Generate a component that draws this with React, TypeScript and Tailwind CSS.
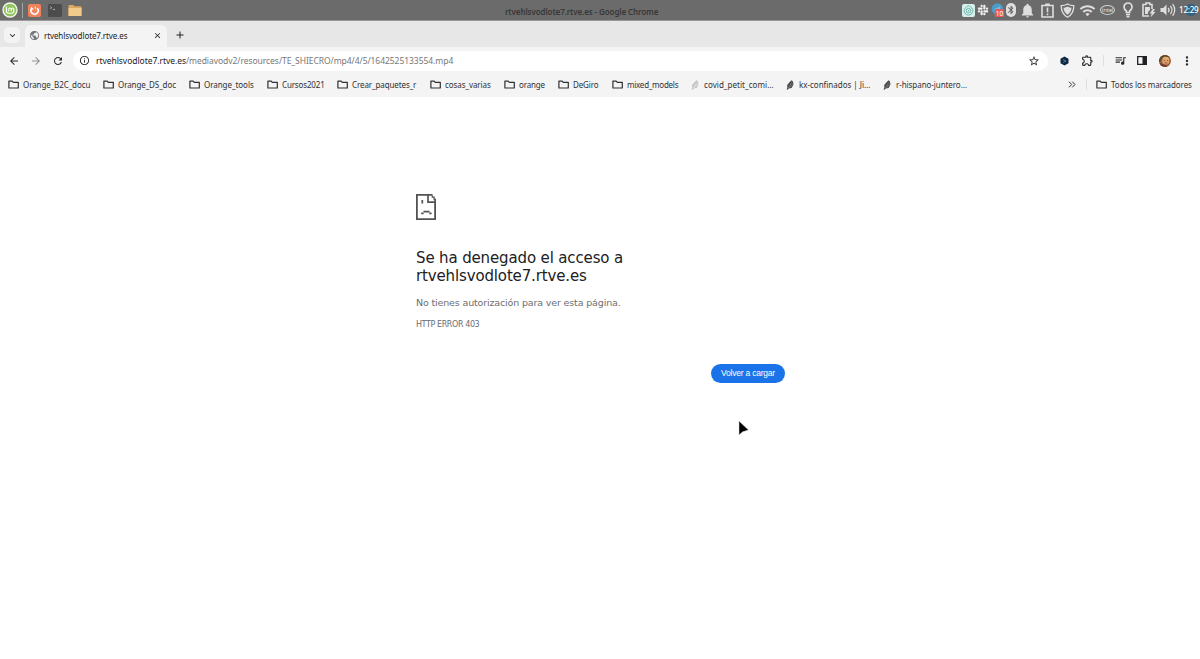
import React from 'react';
import {
  MdAdd,
  MdArrowBack,
  MdArrowForward,
  MdBluetooth,
  MdClose,
  MdInfoOutline,
  MdKeyboardArrowDown,
  MdMoreVert,
  MdNotifications,
  MdOutlineExtension,
  MdPublic,
  MdQueueMusic,
  MdRefresh,
  MdStarBorder,
  MdWifi,
} from 'react-icons/md';
import { FaSlack } from 'react-icons/fa';

interface Bookmark {
  label: string;
  slot: string;
  tracking: string;
  icon: 'folder' | 'feather' | 'faded';
}

const bookmarks: Bookmark[] = [
  { label: 'Orange_B2C_docu', slot: 'w-[95px]', tracking: 'tracking-[-0.1px]', icon: 'folder' },
  { label: 'Orange_DS_doc', slot: 'w-[86px]', tracking: 'tracking-[-0.1px]', icon: 'folder' },
  { label: 'Orange_tools', slot: 'w-[78px]', tracking: 'tracking-[-0.05px]', icon: 'folder' },
  { label: 'Cursos2021', slot: 'w-[70px]', tracking: 'tracking-[-0.15px]', icon: 'folder' },
  { label: 'Crear_paquetes_r', slot: 'w-[93px]', tracking: 'tracking-[-0.1px]', icon: 'folder' },
  { label: 'cosas_varias', slot: 'w-[74px]', tracking: 'tracking-[-0.08px]', icon: 'folder' },
  { label: 'orange', slot: 'w-[54px]', tracking: 'tracking-[-0.15px]', icon: 'folder' },
  { label: 'DeGiro', slot: 'w-[54px]', tracking: 'tracking-[-0.15px]', icon: 'folder' },
  { label: 'mixed_models', slot: 'w-[79px]', tracking: 'tracking-[-0.25px]', icon: 'folder' },
  { label: 'covid_petit_comi…', slot: 'w-[95px]', tracking: 'tracking-[0.06px]', icon: 'faded' },
  { label: 'kx-confinados | Ji…', slot: 'w-[97px]', tracking: 'tracking-[-0.02px]', icon: 'feather' },
  { label: 'r-hispano-juntero…', slot: 'w-[91px]', tracking: 'tracking-[-0.07px]', icon: 'feather' },
];

function FolderIcon() {
  return (
    <svg className="h-[9px] w-[11px] shrink-0" viewBox="0 0 11 9" fill="none" stroke="#303134" strokeWidth="1.2">
      <path d="M.9 1.1h3.3l1.1 1.2h5v5.7H.9z" strokeLinejoin="round" />
    </svg>
  );
}

function FeatherIcon({ faded }: { faded: boolean }) {
  return (
    <svg className="h-[10px] w-[9px] shrink-0" viewBox="0 0 9 10" fill={faded ? '#c2c2c2' : '#4b4b4b'}>
      <path d="M5.6.3 7 1.6 7.4 4.7 5.6 8 2.7 8.4 1.5 9.8.6 9.4 1.3 7.8 1.2 5 3.5 2.3z" />
      <path d="M5.8 2.4 2.4 8M7.4 3.6 3.5 7.5" stroke={faded ? '#f4f4f4' : '#8d8d8d'} strokeWidth=".6" />
    </svg>
  );
}

function MintIcon() {
  return (
    <svg className="h-4 w-4" viewBox="0 0 16 16" fill="none">
      <circle cx="8" cy="8" r="7.7" fill="#f1f7e9" />
      <circle cx="8" cy="8" r="6.3" fill="#91c45c" />
      <path d="M4.4 4.5v4.6a2.2 2.2 0 0 0 2.2 2.2h3a2.2 2.2 0 0 0 2.2-2.2V7.2a1.2 1.2 0 0 0-2.4 0v2M6.8 9.2v-2a1.2 1.2 0 0 1 2.5 0" stroke="#fff" strokeWidth="1.1" />
    </svg>
  );
}

function LauncherIcons() {
  return (
    <div className="flex items-center pl-[2px]">
      <MintIcon />
      <div className="ml-1 h-[15px] w-px bg-[#a3a3a3]" />
      <svg className="ml-[5px] h-[13px] w-[13px]" viewBox="0 0 13 13" fill="none">
        <rect width="13" height="13" rx="2" fill="#f0835a" />
        <path d="M3.9 4.2a3.6 3.6 0 1 0 5.4 0" stroke="#fff" strokeWidth="1.6" />
        <path d="M3 2.4v3.2h3zM6.3 2.2c1.6.6 2.3 2 1.7 3.8" fill="#fff" />
      </svg>
      <svg className="ml-[7px] h-[13px] w-[14px]" viewBox="0 0 14 13" fill="none">
        <rect width="14" height="13" rx="1.5" fill="#4c4c4c" />
        <path d="m2.2 2.5 1.5 1.2-1.5 1.2M4.8 5.4h2.3" stroke="#c9c9c9" strokeWidth=".8" />
      </svg>
      <svg className="ml-[6px] h-[13px] w-[14px]" viewBox="0 0 14 13">
        <path d="M.5 2a1 1 0 0 1 1-1h3.7l1.3 1.3h6a1 1 0 0 1 1 1V12H.5z" fill="#dda95f" />
        <path d="M.5 3.9h13v7a1 1 0 0 1-1 1h-11a1 1 0 0 1-1-1z" fill="#f2ca8b" />
      </svg>
    </div>
  );
}

function TrayIcons() {
  return (
    <div className="flex h-5 items-center text-[#dedede]">
      <svg className="h-[13px] w-[13px]" viewBox="0 0 13 13" fill="none" stroke="#58aa9b">
        <rect width="13" height="13" rx="2" fill="#d8efeb" stroke="none" />
        <path d="M6.5 1.7c3 1.3 4.6 3 4.3 5.6-.5 2.6-2.4 3.7-4.3 3.9-2-.2-3.9-1.4-4.3-3.9C2 4.7 3.7 3 6.5 1.7z" strokeWidth=".8" />
        <circle cx="6.5" cy="6.7" r="2.3" strokeWidth=".8" />
        <circle cx="6.5" cy="6.7" r=".7" fill="#58aa9b" stroke="none" />
      </svg>
      <FaSlack className="ml-[2px] h-3 w-3 text-[#f0f0f0]" />
      <svg className="ml-[2px] h-[14px] w-[14px]" viewBox="0 0 14 14">
        <circle cx="6.3" cy="6" r="5.8" fill="#4a9cc9" />
        <path d="m3 6.2 6.5-3-1.2 6-2-1.5z" fill="#7abcda" />
        <rect x="3.8" y="6" width="9.2" height="8" rx="1.5" fill="#e65c5c" />
        <text x="4.7" y="12.5" fill="#fff" fontSize="6.5" fontFamily="Noto Sans">10</text>
      </svg>
      <span className="ml-px flex h-[14px] w-[10px] items-center justify-center rounded-full bg-[#dedede]">
        <MdBluetooth className="h-[12px] w-[12px] text-[#5c5c5c]" />
      </span>
      <MdNotifications className="ml-[3px] h-[17px] w-[17px]" />
      <svg className="ml-[5px] h-[15px] w-[13px]" viewBox="0 0 13 15" fill="none" stroke="currentColor" strokeWidth="1.6">
        <path d="M1 2.5h11V14H1z" />
        <path d="M4.2 1.4h4.6M6.5 4.5v4.8M6.5 10.6v1.6" />
      </svg>
      <svg className="ml-[6px] h-[15px] w-[15px]" viewBox="0 0 15 15" fill="none" stroke="currentColor">
        <path d="M7.5 1c2 1.3 4 1.7 6.3 1.7 0 5.4-1.7 9-6.3 11.5C2.9 11.7 1.2 8.1 1.2 2.7 3.5 2.7 5.5 2.3 7.5 1z" strokeWidth="1.3" />
        <path d="M7.5 3.6c1.4.8 2.7 1.2 4 1.2-.2 3.1-1.5 5.3-4 6.900-2.500-1.600-3.800-3.800-4-6.900 1.400 0 2.600-.4 4-1.200z" fill="currentColor" stroke="none" />
      </svg>
      <MdWifi className="ml-[4px] h-[17px] w-[17px]" />
      <span className="ml-[4px] flex h-[10px] w-[15px] items-center justify-center rounded-[50%] border border-[#cfcfcf] text-[6px] leading-none tracking-[-0.2px]">intel</span>
      <svg className="ml-[8px] h-[16px] w-[10px]" viewBox="0 0 10 16" fill="none" stroke="currentColor" strokeWidth="1.7">
        <path d="M3.4 10.5V9C2 8 1 7 1 5a4 4 0 0 1 8 0c0 2-1 3-2.4 4v1.5z" />
        <path d="M3 12.5h4M3.5 14.7h3" />
      </svg>
      <svg className="ml-[9px] h-[16px] w-[14px]" viewBox="0 0 14 16" fill="none" stroke="currentColor" strokeWidth="1.6">
        <path d="M10 7V2.5H7.8V1H4v1.5H1V14h6" />
        <path d="M3 5h5v3L6 10v2H3z" fill="currentColor" stroke="none" />
        <path d="m10.8 7-3 4.5h2L8.5 15.5l5-5.5h-2.3L13 7z" fill="currentColor" stroke="none" />
      </svg>
      <svg className="ml-[4px] h-[14px] w-[16px]" viewBox="0 0 16 14" fill="none" stroke="currentColor" strokeWidth="1.3">
        <path d="M.5 5h2.7l3.300-3.500v11L3.200 9H.5z" fill="currentColor" stroke="none" />
        <path d="M8.2 4.800a3.500 3.500 0 0 1 0 4.400M10.400 3a6 6 0 0 1 0 8M12.600 1.200a9 9 0 0 1 0 11.600" />
      </svg>
      <span className="relative ml-[3px] w-[20px] shrink-0 whitespace-nowrap text-[8px] font-medium leading-3 tracking-[-0.2px] text-white">
        <span className="absolute left-[6px] top-0 h-3 w-3 rounded-full bg-[#31627f]" />
        <span className="relative">12:29</span>
      </span>
    </div>
  );
}

function SystemBar() {
  return (
    <header className="grid h-[21px] grid-cols-[505px_1fr_238px] items-center border-b border-[#999] bg-[#6b6b6b]">
      <LauncherIcons />
      <p className="whitespace-nowrap pt-[3px] text-[8px] font-semibold leading-3 tracking-[-0.1px] text-[#383838]">
        rtvehlsvodlote7.rtve.es - Google Chrome
      </p>
      <TrayIcons />
    </header>
  );
}

function TabStrip() {
  return (
    <div className="flex h-[26px] items-end bg-[#e7e7e7] pl-[4px] text-[#202124]">
      <button type="button" className="mb-[4px] flex h-[16px] w-[16px] items-center justify-center rounded-[5px] bg-[#f4f4f4]">
        <MdKeyboardArrowDown className="h-[11px] w-[11px]" />
      </button>
      <div className="ml-[5px] flex h-[22px] w-[142px] items-center rounded-t-[6px] bg-[#f4f4f4] pb-px pl-[4px] pr-[5px]">
        <MdPublic className="h-[11px] w-[11px] text-[#73777b]" />
        <span className="ml-[4px] grow whitespace-nowrap text-[8px] tracking-[-0.1px]">rtvehlsvodlote7.rtve.es</span>
        <MdClose className="h-[9px] w-[9px]" />
      </div>
      <MdAdd className="mb-[6px] ml-[7px] h-[12px] w-[12px]" />
    </div>
  );
}

function Toolbar() {
  return (
    <div className="flex h-[27px] items-center bg-[#f4f4f4] pl-[8px] pr-[6px] text-[#26282b]">
      <MdArrowBack className="h-[12px] w-[12px]" />
      <MdArrowForward className="ml-[10px] h-[12px] w-[12px] text-[#8f8f8f]" />
      <MdRefresh className="ml-[10px] h-[12px] w-[12px]" />
      <div className="ml-[9px] flex h-[20px] w-[975px] items-center rounded-full bg-white pl-[6px] pr-[8px]">
        <MdInfoOutline className="h-[11px] w-[11px]" />
        <p className="ml-[6px] grow whitespace-nowrap pt-px text-[8.5px] tracking-[-0.05px] text-[#777]">
          <span className="text-[#202124]">rtvehlsvodlote7.rtve.es</span>
          /mediavodv2/resources/TE_SHIECRO/mp4/4/5/1642525133554.mp4
        </p>
        <MdStarBorder className="h-[12px] w-[12px]" />
      </div>
      <svg className="ml-[12px] h-[10px] w-[9px]" viewBox="0 0 9 10">
        <path d="M4.5.5 8.5 2.8v4.500L4.500 9.600.5 7.300V2.800z" fill="#0c2845" />
        <path d="m3 3.500 3 1.500-3 1.500" stroke="#6f9ab5" strokeWidth=".7" fill="none" />
      </svg>
      <MdOutlineExtension className="ml-[12px] h-[13px] w-[13px]" />
      <div className="ml-[9px] h-[11px] w-px bg-[#dfdfdf]" />
      <MdQueueMusic className="ml-[10px] h-[13px] w-[13px]" />
      <svg className="ml-[10px] h-[9px] w-[10px]" viewBox="0 0 10 9">
        <path d="M.7.7h8.600v7.600H.7z" fill="none" stroke="#202124" strokeWidth="1.3" />
        <path d="M5.5.5h4v8h-4z" fill="#202124" />
      </svg>
      <svg className="ml-[12px] h-[12px] w-[12px] rounded-full" viewBox="0 0 12 12">
        <path d="M0 0h12v12H0z" fill="#99643d" />
        <path d="M0 0h12v3L8 2 3 3 1 7H0z" fill="#59452f" />
        <circle cx="6.8" cy="6" r="3.6" fill="#dda06e" />
        <path d="M3 3.500C5 1 9 1 10.500 4L7 3.500z" fill="#e4b367" />
        <path d="M5 5.500h1M8 5.500h1M5.500 8h3" stroke="#71412d" strokeWidth=".7" />
        <path d="M0 8c3 0 4 2 7 2l2 2H0z" fill="#77382c" />
      </svg>
      <MdMoreVert className="ml-[9px] h-[14px] w-[14px]" />
    </div>
  );
}

function BookmarksBar() {
  return (
    <nav className="flex h-[23px] items-center bg-[#f4f4f4] pb-[2px] pl-[8px] text-[8px] text-[#303134]">
      {bookmarks.map((item) => (
        <div key={item.label} className={`flex shrink-0 items-center gap-[4px] whitespace-nowrap ${item.slot}`}>
          {item.icon === 'folder' ? <FolderIcon /> : <FeatherIcon faded={item.icon === 'faded'} />}
          <span className={item.tracking}>{item.label}</span>
        </div>
      ))}
      <svg className="ml-[94px] h-[7px] w-[8px]" viewBox="0 0 8 7" fill="none" stroke="#303134">
        <path d="m1 .7 2.700 2.800L1 6.300M4.300.7 7 3.500 4.300 6.300" />
      </svg>
      <div className="ml-[10px] h-[11px] w-px bg-[#dfdfdf]" />
      <div className="ml-[9px] flex items-center gap-[4px] whitespace-nowrap">
        <FolderIcon />
        <span className="tracking-[-0.05px]">Todos los marcadores</span>
      </div>
    </nav>
  );
}

function SadPageIcon() {
  return (
    <svg className="h-[26px] w-[20px]" viewBox="0 0 20 26" fill="none" stroke="#535353">
      <path d="M16.5.9H.9v24.200h18.200V5" strokeWidth="1.800" />
      <path d="M12 .9v7.200h7" strokeWidth="1.700" />
      <path d="M16.300 1.500v1.700h1.800v2h1.500" strokeWidth="1.300" />
      <path d="M6.300 6v3.500M7.500 17.600h6M5.200 19.400h2.400M13.300 19.400h2.300" strokeWidth="1.700" />
    </svg>
  );
}

function ErrorPage() {
  return (
    <main className="relative h-[562px] bg-white pl-[416px] pt-[97px] font-['DejaVu_Sans',sans-serif]">
      <SadPageIcon />
      <h1 className="mt-[29px] w-[369px] text-[15px] leading-[18px] tracking-[-0.14px] text-[#202124]">
        Se ha denegado el acceso a
        <br />
        rtvehlsvodlote7.rtve.es
      </h1>
      <p className="mt-[11px] text-[9.5px] leading-[14px] tracking-[-0.15px] text-[#6b6e72]">No tienes autorización para ver esta página.</p>
      <p className="mt-[10px] text-[8px] leading-[10px] tracking-[-0.4px] text-[#6b6e72]">HTTP ERROR 403</p>
      <div className="mt-[34px] flex w-[369px] justify-end">
        <button type="button" className="h-[19px] w-[74px] whitespace-nowrap rounded-full bg-[#1a73e8] font-['Liberation_Sans',sans-serif] text-[8.5px] tracking-[-0.22px] text-white">
          Volver a cargar
        </button>
      </div>
      <svg className="absolute left-[737px] top-[322px] h-[18px] w-[13px]" viewBox="0 0 13 18">
        <path d="M2 2v14l3.700-3.200L11.500 11z" fill="#000" stroke="#ddd" strokeWidth=".5" />
      </svg>
    </main>
  );
}

function App() {
  return (
    <div className="h-[659px] w-[1200px] overflow-hidden bg-white font-['Noto_Sans',sans-serif]">
      <SystemBar />
      <TabStrip />
      <Toolbar />
      <BookmarksBar />
      <ErrorPage />
    </div>
  );
}

export default App;
